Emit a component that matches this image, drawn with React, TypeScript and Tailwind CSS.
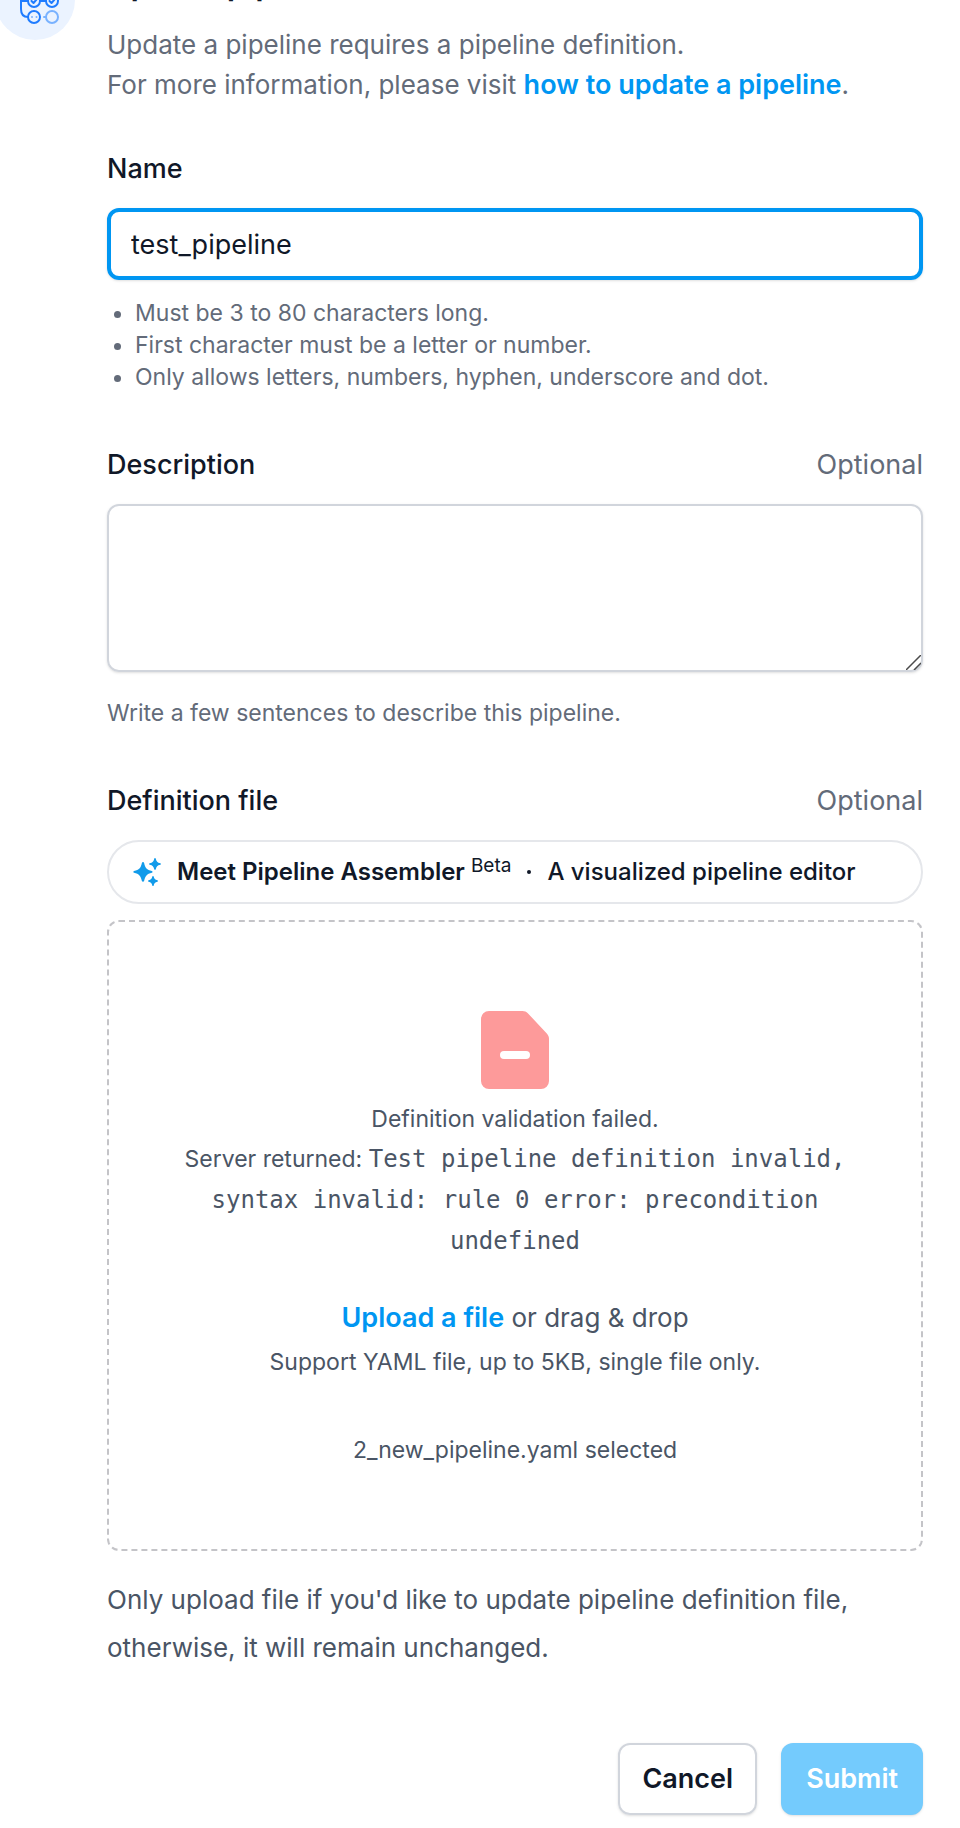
import { useState } from "react";

function WorkflowIcon() {
  return (
    <svg width="48" height="48" viewBox="0 0 48 48" fill="none" strokeWidth="2" strokeLinecap="round" strokeLinejoin="round" aria-hidden="true">
      <rect x="3" y="3" width="14" height="12" rx="2" stroke="#1f7cff" />
      <path d="M10 15v18c0 5 2.500 8 7 8M10 25h7M29 25h6" stroke="#1f7cff" />
      <circle cx="23" cy="25" r="6" stroke="#1f7cff" />
      <circle cx="41" cy="25" r="6" stroke="#1f7cff" />
      <path d="M20.500 25l2 2 3.500-4M38.500 25l2 2 3.500-4" stroke="#1f7cff" />
      <circle cx="23" cy="41" r="6" stroke="#1f7cff" />
      <path d="M21 41h.01M25.500 41h.01" stroke="#79b2ff" />
      <circle cx="41" cy="41" r="6" stroke="#79b2ff" />
      <path d="M33 41h2" stroke="#79b2ff" />
    </svg>
  );
}

function SparklesIcon() {
  return (
    <svg width="28" height="28" viewBox="0 0 28 28" fill="#129bea" aria-hidden="true">
      <path d="M10 4c.6 0 .9.3 1.100.9 1.200 5 2.600 6.700 7.800 8 .8.200.8 1.700 0 1.900-5.200 1.300-6.600 3-7.800 8.200-.3.900-1.900.9-2.200 0-1.200-5.200-2.600-6.900-7.900-8.200-.8-.2-.8-1.700 0-1.900 5.300-1.300 6.700-3 7.900-8C9.100 4.300 9.400 4 10 4Z" />
      <path d="M22 0c.5 0 .7.2.8.7.6 2.900 1.500 3.800 4.500 4.500.8.200.8 1.400 0 1.600-3 .7-3.900 1.600-4.500 4.500-.2.700-1.400.7-1.600 0-.6-2.900-1.500-3.800-4.500-4.500-.8-.2-.8-1.400 0-1.600 3-.7 3.900-1.600 4.500-4.500.1-.5.300-.7.800-.7Z" />
      <path d="M20 18c.5 0 .6.200.7.600.5 2.300 1.300 3.100 3.700 3.700.7.200.7 1.200 0 1.400-2.400.6-3.200 1.400-3.700 3.700-.2.700-1.200.7-1.400 0-.5-2.300-1.300-3.100-3.700-3.700-.7-.2-.7-1.200 0-1.400 2.400-.6 3.200-1.400 3.700-3.700.1-.4.200-.6.700-.6Z" />
    </svg>
  );
}

function FailedFileIcon() {
  return (
    <svg width="68" height="78" viewBox="0 0 68 78" aria-hidden="true">
      <path d="M8 0h33.500c2 0 3.900.8 5.300 2.200L65.800 22.500c1.400 1.400 2.200 3.300 2.200 5.300V70a8 8 0 0 1-8 8H8a8 8 0 0 1-8-8V8a8 8 0 0 1 8-8Z" fill="#fd9a9a" />
      <rect x="19" y="40" width="30" height="8" rx="4" fill="#fff" />
    </svg>
  );
}

export default function App() {
  const [name, setName] = useState("test_pipeline");
  const [description, setDescription] = useState("");

  return (
    <main className="overflow-hidden bg-white pb-3 font-['Inter',sans-serif] text-[26px] leading-10 text-gray-900">
      <div className="-mt-10 -ml-[5px] flex items-start gap-8 pr-[37px]">
        <div className="flex size-20 shrink-0 items-center justify-center rounded-full bg-[#ebf3ff]">
          <WorkflowIcon />
        </div>
        <form className="min-w-0 flex-1" onSubmit={(e) => e.preventDefault()}>
          <h3 className="text-[32px] leading-12 font-semibold">Update pipeline</h3>
          <p className="mt-[17px] text-[#636b79]">
            Update a pipeline requires a pipeline definition.
            <br />
            For more information, please visit{" "}
            <a href="#docs" className="text-[27px] font-semibold text-[#0096f2]">how to update a pipeline</a>.
          </p>

          <div className="mt-11 text-[27px]">
            <label htmlFor="name" className="block font-medium">Name</label>
            <input
              id="name"
              type="text"
              value={name}
              onChange={(e) => setName(e.target.value)}
              className="mt-[19px] block h-18 w-full rounded-xl border-4 border-[#0096f2] px-5 shadow-sm outline-none"
            />
            <ul className="mt-[17px] list-disc pl-7 text-[23px] leading-8 text-[#636b79]">
              <li>Must be 3 to 80 characters long.</li>
              <li>First character must be a letter or number.</li>
              <li>Only allows letters, numbers, hyphen, underscore and dot.</li>
            </ul>
          </div>

          <div className="mt-13">
            <div className="flex justify-between text-[27px]">
              <label htmlFor="description" className="font-medium">Description</label>
              <span className="text-[#636b79]">Optional</span>
            </div>
            <div className="relative mt-[19px]">
              <textarea
                id="description"
                value={description}
                onChange={(e) => setDescription(e.target.value)}
                className="block h-42 w-full resize-y rounded-xl border-2 border-gray-300 px-5 py-3 shadow-sm [&::-webkit-resizer]:hidden"
              />
              <svg className="pointer-events-none absolute right-0.5 bottom-0.5" width="15" height="15" viewBox="0 0 15 15" fill="none" stroke="#4b4b4b" strokeWidth="1.500" aria-hidden="true">
                <path d="M0 15 15 0M8 15l7-7" />
              </svg>
            </div>
            <p className="mt-[25px] text-[23px] leading-8 text-[#636b79]">Write a few sentences to describe this pipeline.</p>
          </div>

          <div className="mt-13">
            <div className="flex justify-between text-[27px]">
              <label htmlFor="file" className="font-medium">Definition file</label>
              <span className="text-[#636b79]">Optional</span>
            </div>
            <a href="#assembler" className="mt-[19px] flex h-16 items-center rounded-full border-2 border-gray-200 px-6 text-2xl">
              <SparklesIcon />
              <span className="ml-4 font-semibold">Meet Pipeline Assembler</span>
              <span className="mb-3 ml-1.5 text-[19px] leading-6">Beta</span>
              <span className="mx-4 size-1 rounded-full bg-gray-900" />
              <span className="font-medium">A visualized pipeline editor</span>
            </a>
            <div className="mt-4 flex flex-col items-center rounded-xl border-2 border-dashed border-[#c4c4c8] px-16 pt-[89px] pb-[79px] text-center text-[23px] text-gray-600">
              <FailedFileIcon />
              <p className="mt-2.5">
                Definition validation failed.
                <br />
                Server returned:{" "}
                <code className="font-['DejaVu_Sans_Mono',monospace] text-2xl leading-[41px]">
                  Test pipeline definition invalid, syntax invalid: rule 0 error: precondition undefined
                </code>
              </p>
              <p className="mt-9 text-[26px]">
                <label htmlFor="file" className="cursor-pointer text-[27px] font-semibold text-[#0096f2]">Upload a file</label>
                <input id="file" type="file" accept=".yaml,.yml" className="sr-only" /> or drag &amp; drop
              </p>
              <p className="mt-1">Support YAML file, up to 5KB, single file only.</p>
              <p className="mt-12">2_new_pipeline.yaml selected</p>
            </div>
            <p className="mt-[25px] leading-12 text-gray-600">
              Only upload file if you'd like to update pipeline definition file, otherwise, it will remain unchanged.
            </p>
          </div>

          <div className="mt-[71px] flex justify-end gap-6 text-[27px]">
            <button type="button" className="h-18 rounded-xl border-2 border-gray-300 px-[22px] font-semibold shadow-sm">Cancel</button>
            <button type="submit" className="h-18 rounded-xl bg-[#74cbfd] px-[25px] font-semibold text-white shadow-sm">Submit</button>
          </div>
        </form>
      </div>
    </main>
  );
}
